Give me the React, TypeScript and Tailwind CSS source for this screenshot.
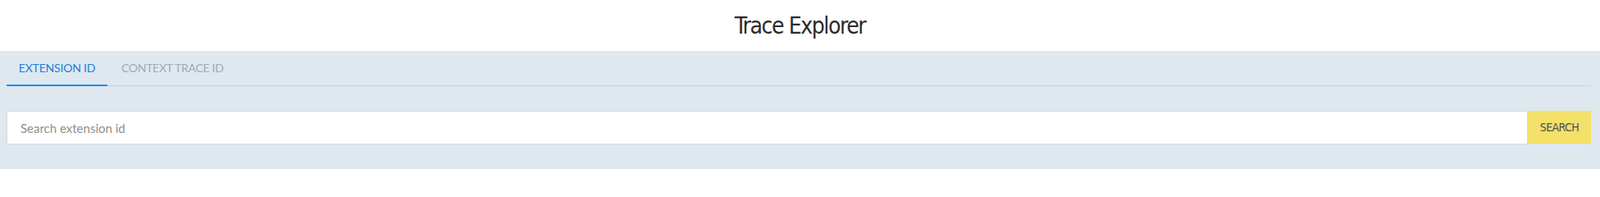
export default function App() {
  return (
    <div className="w-[1951px] h-[206px] bg-[#dfe8ef] font-['Lato','Open_Sans',sans-serif]">
      <header className="h-[62px] bg-white flex items-center justify-center">
        <h1 className="text-[28px] leading-none text-[#2b2b2b] font-['DejaVu_Sans_Condensed','Liberation_Sans',sans-serif] tracking-[-1.4px] pt-[2px]">
          Trace Explorer
        </h1>
      </header>

      <div className="pl-[8px] pr-[11px]">
        <div className="flex border-b border-[#c9d1da] h-[43px]">
          <button className="w-[123px] h-[43px] text-[14px] tracking-[-0.2px] text-[#1a7ee0] border-b-2 border-[#1a8cf0] -mb-px">
            EXTENSION ID
          </button>
          <button className="pl-[17px] pr-[14px] h-[43px] text-[14px] tracking-[-0.3px] text-[#9fa9b5] pb-[2px]">
            CONTEXT TRACE ID
          </button>
        </div>

        <div className="flex mt-[30px]">
          <input
            className="flex-1 h-[41px] bg-white border border-[#d3d9e0] rounded-l-[2px] px-[16px] text-[15px] text-[#555] placeholder:text-[#8f8f8f] outline-none"
            placeholder="Search extension id"
          />
          <button className="w-[77px] h-[40px] bg-[#f3e16a] text-[14px] tracking-[-0.6px] text-[#4d4f55] font-['DejaVu_Sans_Condensed','Liberation_Sans',sans-serif]">
            SEARCH
          </button>
        </div>
      </div>
    </div>
  )
}
